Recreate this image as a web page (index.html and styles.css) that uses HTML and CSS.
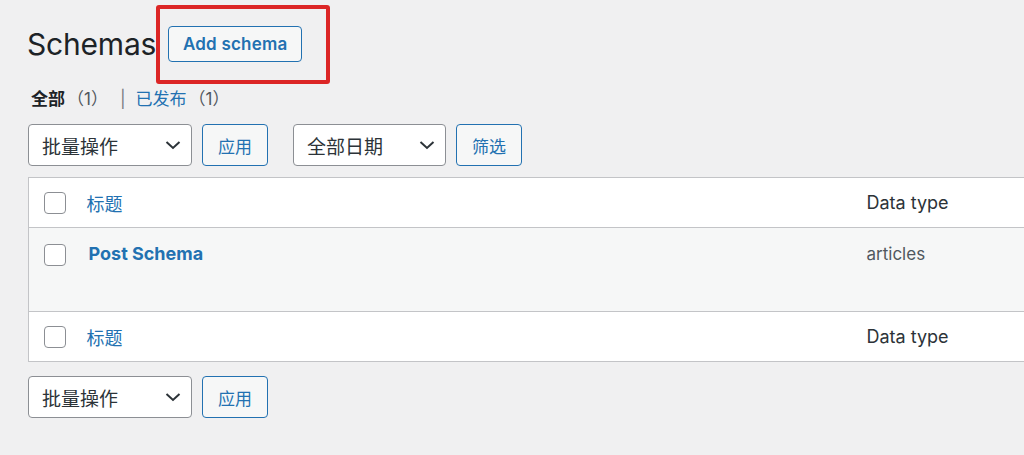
FILE: index.html
```html
<!DOCTYPE html>
<html lang="zh-CN">
<head>
<meta charset="utf-8">
<title>Schemas</title>
<link rel="stylesheet" href="styles.css">
</head>
<body>
<div class="wrap">
  <div class="heading">
    <h1 class="title">Schemas</h1>
    <a class="btn btn-add">Add schema</a>
    <div class="highlight"></div>
  </div>

  <ul class="subsubsub">
    <li class="current">全部<span class="count">（1）</span></li>
    <li class="sep">|</li>
    <li><a class="link">已发布</a><span class="count">（1）</span></li>
  </ul>

  <div class="tablenav">
    <div class="select sel-bulk"><span>批量操作</span><svg class="chev" width="16" height="10" viewBox="0 0 16 10"><path d="M1.5 2 L8 8 L14.5 2" fill="none" stroke="#2c3338" stroke-width="2"/></svg></div>
    <a class="btn">应用</a>
    <div class="select sel-date"><span>全部日期</span><svg class="chev" width="16" height="10" viewBox="0 0 16 10"><path d="M1.5 2 L8 8 L14.5 2" fill="none" stroke="#2c3338" stroke-width="2"/></svg></div>
    <a class="btn">筛选</a>
  </div>

  <table class="list">
    <colgroup><col class="c-cb"><col class="c-title"><col class="c-type"></colgroup>
    <thead>
      <tr><td class="cb"><span class="checkbox"></span></td><th class="col-title"><a class="link">标题</a></th><th class="col-type">Data type</th></tr>
    </thead>
    <tbody>
      <tr class="row"><td class="cb"><span class="checkbox"></span></td><td class="row-title"><a class="link strong">Post Schema</a></td><td class="type">articles</td></tr>
    </tbody>
    <tfoot>
      <tr><td class="cb"><span class="checkbox"></span></td><th class="col-title"><a class="link">标题</a></th><th class="col-type">Data type</th></tr>
    </tfoot>
  </table>

  <div class="tablenav bottom">
    <div class="select sel-bulk"><span>批量操作</span><svg class="chev" width="16" height="10" viewBox="0 0 16 10"><path d="M1.5 2 L8 8 L14.5 2" fill="none" stroke="#2c3338" stroke-width="2"/></svg></div>
    <a class="btn">应用</a>
  </div>
</div>
</body>
</html>
```
FILE: styles.css
```css
html, body {
  margin: 0;
  padding: 0;
  background: #f0f0f1;
  overflow: hidden;
  font-family: Inter, "Noto Sans CJK SC", sans-serif;
  color: #1d2327;
}
.wrap {
  padding: 26px 0 0 28px;
}
.heading {
  position: relative;
  display: flex;
  align-items: center;
  height: 36px;
}
.title {
  margin: 0 12px 0 -1px;
  font-size: 30px;
  font-weight: 400;
  line-height: 36px;
  color: #1d2327;
  letter-spacing: -0.2px;
}
.highlight {
  position: absolute;
  left: 128px;
  top: -21px;
  width: 166px;
  height: 71px;
  border: 4px solid #dc2626;
  border-radius: 3px;
}
.btn {
  box-sizing: border-box;
  display: inline-flex;
  align-items: center;
  justify-content: center;
  height: 42px;
  width: 66px;
  padding: 0;
  border: 1px solid #2271b1;
  border-radius: 4px;
  background: #f6f7f7;
  color: #2271b1;
  font-size: 17px;
}
.btn-add {
  height: 36px;
  width: 134px;
  font-weight: 600;
  font-size: 17px;
  letter-spacing: 0.2px;
}
.subsubsub {
  list-style: none;
  margin: 25px 0 0 3px;
  padding: 0;
  display: flex;
  font-size: 17px;
  line-height: 24px;
  height: 24px;
}
.subsubsub li { display: flex; }
.current { font-weight: 700; color: #1d2327; }
.count { font-weight: 400; color: #50575e; margin-left: 2px; }
.sep { color: #787c82; margin: 0 10px 0 12px; }
.link { color: #2271b1; text-decoration: none; }
.tablenav {
  display: flex;
  align-items: center;
  margin-top: 13px;
  height: 42px;
}
.select {
  box-sizing: border-box;
  display: flex;
  align-items: center;
  justify-content: space-between;
  height: 42px;
  padding: 0 10px 0 13px;
  border: 1px solid #8c8f94;
  border-radius: 4px;
  background: #fff;
  color: #2c3338;
  font-size: 19px;
  margin-right: 10px;
}
.sel-bulk { width: 164px; }
.sel-date { width: 153px; margin-left: 25px; }
.chev { display: block; }
.list {
  margin-top: 11px;
  border-collapse: collapse;
  table-layout: fixed;
  width: 1100px;
  background: #fff;
  border: 1px solid #c3c4c7;
}
.c-cb { width: 58px; }
.c-title { width: 780px; }
.c-type { width: 262px; }
.list td, .list th {
  padding: 0;
  text-align: left;
  font-weight: 400;
  vertical-align: middle;
}
.list thead tr { height: 50px; border-bottom: 1px solid #c3c4c7; }
.list tfoot tr { height: 50px; border-top: 1px solid #c3c4c7; }
.list .cb { padding-left: 15px; }
.checkbox {
  box-sizing: border-box;
  display: block;
  width: 22px;
  height: 22px;
  border: 1px solid #8c8f94;
  border-radius: 4px;
  background: #fff;
}
.col-title { font-size: 18px; }
.col-type { font-size: 18px; color: #2c3338; }
.row { height: 84px; background: #f6f7f7; }
.row td { vertical-align: top; }
.row .cb { padding-top: 16px; }
.row-title { padding-top: 14px !important; padding-left: 2px !important; }
.strong { font-weight: 700; font-size: 18px; line-height: 24px; }
.type { padding-top: 14px !important; font-size: 17px; line-height: 24px; color: #50575e; }
.tablenav.bottom { margin-top: 14px; }
```
